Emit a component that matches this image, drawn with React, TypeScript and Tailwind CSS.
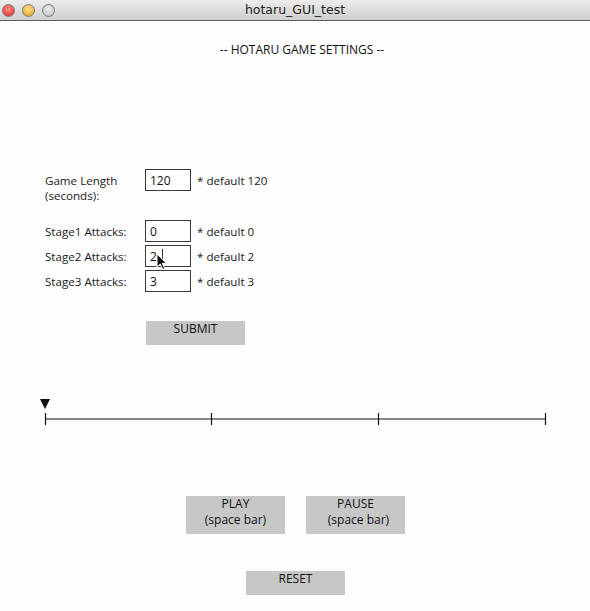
import React from "react";

const font = { fontFamily: '"Open Sans", "DejaVu Sans", sans-serif' };

function Light({ c1, c2 }: { c1: string; c2: string }) {
  return (
    <div
      className="w-[13px] h-[13px] rounded-full border border-[#7a7a7a]"
      style={{ background: `radial-gradient(circle at 50% 35%, ${c1}, ${c2})` }}
    />
  );
}

function Row({ label, value, def, sub }: { label: string; value: string; def: string; sub?: string }) {
  return (
    <div className="flex items-start">
      <div className="w-[100px] text-[11.6px] leading-[15px] pt-[4px] text-[#1a1a1a]">
        <div>{label}</div>
        {sub && <div>{sub}</div>}
      </div>
      <div className="w-[46px] h-[22px] border border-[#3a3a3a] bg-white text-[12px] leading-[21px] pl-[4px] text-[#111] relative">
        {value}
      </div>
      <div className="ml-[6px] text-[11.6px] leading-[15px] pt-[4px] text-[#1a1a1a]">{def}</div>
    </div>
  );
}

export default function App() {
  return (
    <div className="w-[590px] h-[611px] bg-[#fdfdfd] flex flex-col overflow-hidden relative" style={font}>
      {/* title bar */}
      <div className="h-[21px] border-b border-[#5c5c5c] bg-gradient-to-b from-[#ececec] to-[#cfcfcf] flex items-center relative">
        <div className="flex gap-[7px] pl-[2px]">
          <Light c1="#ff8f8a" c2="#d9231c" />
          <Light c1="#ffe08a" c2="#e39d12" />
          <Light c1="#eeeeee" c2="#b8b8b8" />
        </div>
        <div className="absolute left-0 right-0 text-center text-[13px] text-[#222] leading-[20px]" style={{ fontFamily: '"DejaVu Sans", "Open Sans", sans-serif', fontSize: 12.5 }}>
          hotaru_GUI_test
        </div>
      </div>

      <div className="mt-[21px] pl-[14px] text-center text-[12px] leading-[16px] text-[#111]">-- HOTARU GAME SETTINGS --</div>

      <div className="mt-[111px] pl-[45px] flex flex-col">
        <Row label="Game Length" sub="(seconds):" value="120" def="* default 120" />
        <div className="mt-[17px] flex flex-col gap-[3px]">
          <Row label="Stage1 Attacks:" value="0" def="* default 0" />
          <div className="relative">
            <Row label="Stage2 Attacks:" value="2" def="* default 2" />
            <div className="absolute left-[117px] top-[4px] w-px h-[10px] bg-[#333]" />
            <svg className="absolute left-[111px] top-[8px]" width="14" height="18" viewBox="0 0 14 18">
              <path d="M1 1 L1 14 L4.2 11 L6.6 16.5 L8.6 15.6 L6.3 10.3 L10.6 10.3 Z" fill="#111" stroke="#fff" strokeWidth="1" />
            </svg>
          </div>
          <Row label="Stage3 Attacks:" value="3" def="* default 3" />
        </div>
        <div className="mt-[29px] ml-[101px] w-[99px] h-[24px] bg-[#c7c7c7] text-center text-[12px] leading-[16px] pt-[0px] text-[#111]">
          SUBMIT
        </div>
      </div>

      <div className="mt-[52px] pl-[35px]">
        <svg width="520" height="32" viewBox="0 0 520 32">
          <polygon points="5,2 15,2 10,12" fill="#111" />
          <line x1="10" y1="22" x2="510" y2="22" stroke="#111" strokeWidth="1.2" />
          <line x1="10.5" y1="16" x2="10.5" y2="28" stroke="#111" strokeWidth="1.2" />
          <line x1="176.5" y1="16" x2="176.5" y2="28" stroke="#111" strokeWidth="1.2" />
          <line x1="343.5" y1="16" x2="343.5" y2="28" stroke="#111" strokeWidth="1.2" />
          <line x1="510.5" y1="16" x2="510.5" y2="28" stroke="#111" strokeWidth="1.2" />
        </svg>
      </div>

      <div className="mt-[67px] flex gap-[21px] pl-[186px]">
        <div className="w-[99px] h-[38px] bg-[#c7c7c7] text-center text-[12px] leading-[16px] text-[#111]">
          <div>PLAY</div>
          <div>(space bar)</div>
        </div>
        <div className="w-[99px] h-[38px] bg-[#c7c7c7] text-center text-[12px] leading-[16px] text-[#111]">
          <div>PAUSE</div>
          <div className="pl-[6px]">(space bar)</div>
        </div>
      </div>

      <div className="mt-[37px] ml-[246px] w-[99px] h-[24px] bg-[#c7c7c7] text-center text-[12px] leading-[16px] text-[#111]">
        RESET
      </div>
    </div>
  );
}
